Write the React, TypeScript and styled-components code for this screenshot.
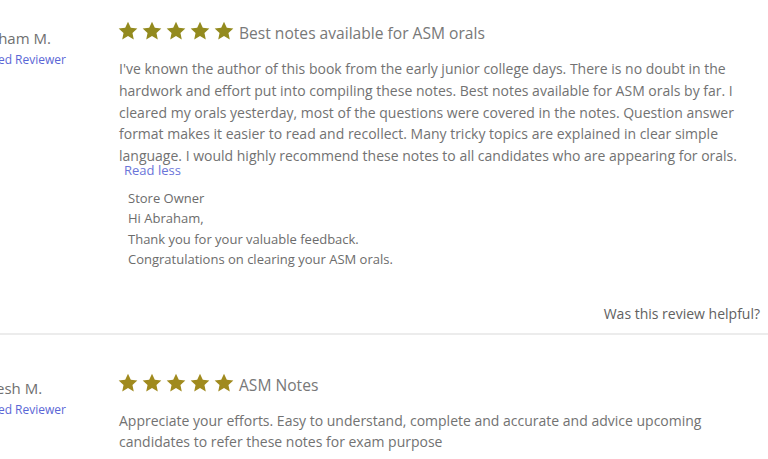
import * as React from "react";
import styled, { createGlobalStyle } from "styled-components";

const GlobalStyle = createGlobalStyle`
  html, body {
    margin: 0;
    padding: 0;
    background: #ffffff;
    font-family: "Open Sans", "Liberation Sans", sans-serif;
    overflow: hidden;
  }
`;

const Page = styled.div`
  width: 768px;
  height: 459px;
  overflow: hidden;
`;

const List = styled.div`
  margin-left: -31px;
  width: 799px;
`;

interface ReviewProps {
  readonly first?: boolean;
}

const ReviewRow = styled.div<ReviewProps>`
  display: grid;
  grid-template-columns: 149px 642px;
  padding-top: ${({ first }) => (first ? "19px" : "37px")};
  padding-bottom: ${({ first }) => (first ? "9px" : "20px")};
  border-bottom: ${({ first }) => (first ? "2px solid #ececec" : "none")};
`;

interface AuthorProps {
  readonly offset: number;
}

const Author = styled.div<AuthorProps>`
  display: flex;
  flex-direction: column;
  padding-top: ${({ offset }) => offset}px;
`;

const AuthorName = styled.div`
  margin-left: -4px;
  font-size: 15px;
  color: #707070;
  line-height: 21px;
`;

const Verified = styled.div`
  font-size: 12px;
  color: #5a66d6;
  line-height: 21px;
`;

const Body = styled.div`
  display: flex;
  flex-direction: column;
`;

const Header = styled.div`
  display: flex;
  align-items: center;
  gap: 5px;
  height: 22px;
`;

const Stars = styled.div`
  display: flex;
  gap: 4px;
`;

const Title = styled.div`
  font-size: 15.6px;
  color: #787878;
  line-height: 22px;
  padding-top: 5px;
`;

interface TextProps {
  readonly gapTop: number;
}

const Text = styled.p<TextProps>`
  margin: ${({ gapTop }) => gapTop}px 0 0 1px;
  font-size: 14px;
  line-height: 21.8px;
  color: #727272;
`;

const ReadLess = styled.div`
  margin: -4px 0 0 6px;
  font-size: 13px;
  line-height: 14px;
  color: #6a74d9;
`;

const Reply = styled.div`
  margin: 11px 0 0 10px;
  font-size: 13px;
  line-height: 20.4px;
  color: #6c6c6c;
`;

const Helpful = styled.div`
  margin-top: 34px;
  text-align: right;
  font-size: 14px;
  line-height: 20px;
  color: #616161;
`;

const Star = ({ color }: { color: string }) => (
  <svg width="20" height="19" viewBox="0 0 24 23">
    <path
      d="M12 0.8l3.4 7.3 7.9 0.9-5.9 5.4 1.6 7.9L12 18.3l-7 4 1.6-7.9L0.7 9l7.9-0.9z"
      fill={color}
    />
  </svg>
);

interface ReviewData {
  name: string;
  title: string;
  text: string;
  color: string;
}

const reviews: ReviewData[] = [
  {
    name: "Abraham M.",
    title: "Best notes available for ASM orals",
    text:
      "I've known the author of this book from the early junior college days. There is no doubt in the hardwork and effort put into compiling these notes. Best notes available for ASM orals by far. I cleared my orals yesterday, most of the questions were covered in the notes. Question answer format makes it easier to read and recollect. Many tricky topics are explained in clear simple language. I would highly recommend these notes to all candidates who are appearing for orals.",
    color: "#938a1e",
  },
  {
    name: "Mahesh M.",
    title: "ASM Notes",
    text:
      "Appreciate your efforts. Easy to understand, complete and accurate and advice upcoming candidates to refer these notes for exam purpose",
    color: "#a08a1e",
  },
];

export default function App(): JSX.Element {
  return (
    <Page>
      <GlobalStyle />
      <List>
        {reviews.map((r, i) => (
          <ReviewRow key={r.name} first={i === 0}>
            <Author offset={i === 0 ? 9 : 6}>
              <AuthorName>{r.name}</AuthorName>
              <Verified>Verified Reviewer</Verified>
            </Author>
            <Body>
              <Header>
                <Stars>
                  {[0, 1, 2, 3, 4].map((s) => (
                    <Star key={s} color={r.color} />
                  ))}
                </Stars>
                <Title>{r.title}</Title>
              </Header>
              <Text gapTop={i === 0 ? 17 : 16}>{r.text}</Text>
              {i === 0 && (
                <>
                  <ReadLess>Read less</ReadLess>
                  <Reply>
                    Store Owner
                    <br />
                    Hi Abraham,
                    <br />
                    Thank you for your valuable feedback.
                    <br />
                    Congratulations on clearing your ASM orals.
                  </Reply>
                  <Helpful>Was this review helpful?</Helpful>
                </>
              )}
            </Body>
          </ReviewRow>
        ))}
      </List>
    </Page>
  );
}
